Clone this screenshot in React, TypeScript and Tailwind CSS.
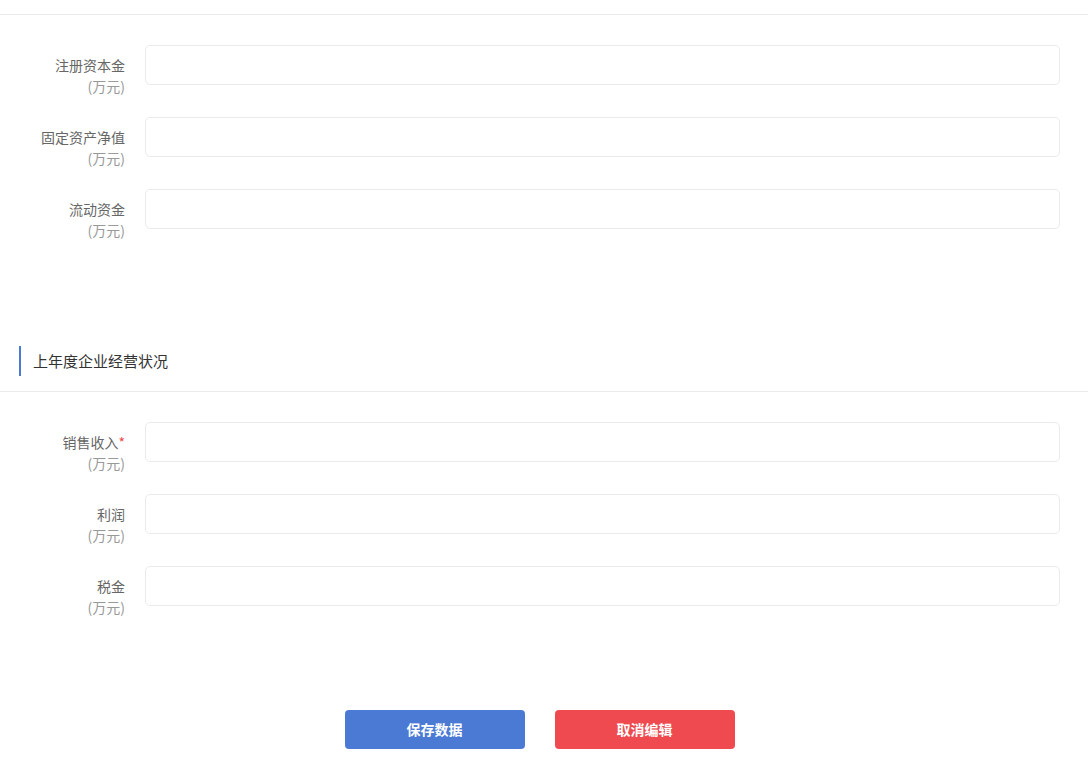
const first = [
  { label: '注册资本金' },
  { label: '固定资产净值' },
  { label: '流动资金' },
]

const second = [
  { label: '销售收入', required: true },
  { label: '利润' },
  { label: '税金' },
]

function Row({ label, required }: { label: string; required?: boolean }) {
  return (
    <div className="flex h-[72px]">
      <div className="w-[125px] h-[40px] shrink-0 text-right pt-[10px] text-[14px] leading-[21px]">
        <div className="text-[#666]">
          {label}
          {required && <span className="text-[#ee4a4e]">*</span>}
        </div>
        <div className="text-[#999]">(万元)</div>
      </div>
      <input className="ml-[20px] flex-1 h-[40px] rounded-[5px] border border-[#ebebeb] px-3 outline-none" />
    </div>
  )
}

export default function App() {
  return (
    <div
      className="w-[1088px] h-[780px] bg-white overflow-hidden"
      style={{ fontFamily: '"Noto Sans CJK SC", "Noto Sans", sans-serif' }}
    >
      <div className="h-[15px] border-b border-[#ebebeb]" />

      <div className="pt-[30px] pr-[28px]">
        {first.map((r) => (
          <Row key={r.label} {...r} />
        ))}
      </div>

      <div className="mt-[85px] h-[46px] border-b border-[#ebebeb] flex items-start">
        <div className="ml-[19px] h-[30px] border-l-2 border-[#4a7bd4] pl-[12px] flex items-center text-[15px] text-[#333]">
          上年度企业经营状况
        </div>
      </div>

      <div className="pt-[30px] pr-[28px]">
        {second.map((r) => (
          <Row key={r.label} {...r} />
        ))}
      </div>

      <div className="mt-[72px] flex justify-center gap-[30px] pr-[9px]">
        <button className="w-[180px] h-[39px] rounded-[4px] bg-[#4a7ad4] text-white text-[14px] font-semibold">
          保存数据
        </button>
        <button className="w-[180px] h-[39px] rounded-[4px] bg-[#ee4a4f] text-white text-[14px] font-semibold">
          取消编辑
        </button>
      </div>
    </div>
  )
}
